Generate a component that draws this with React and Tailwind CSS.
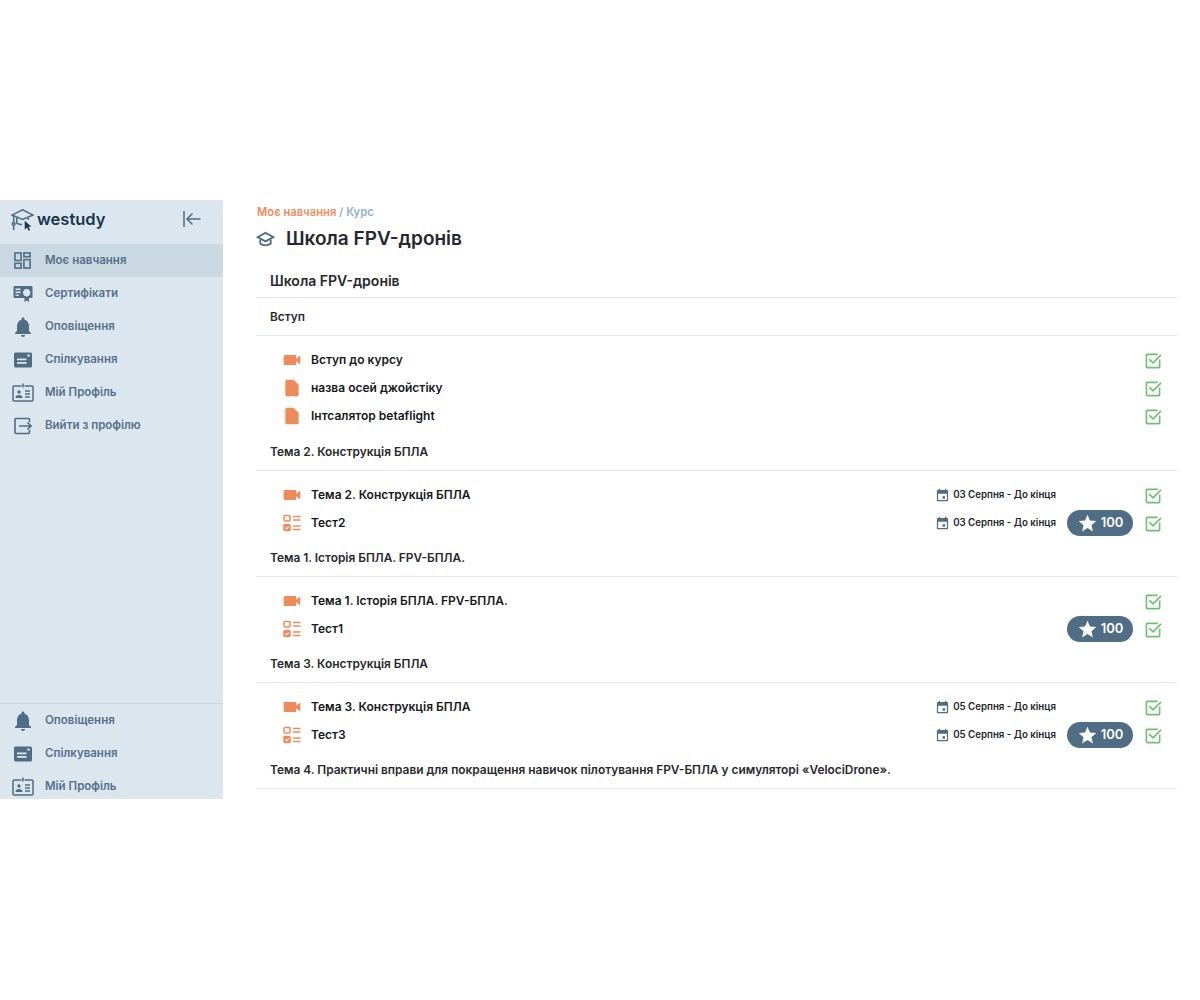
const font = { fontFamily: 'Inter, "Noto Sans", sans-serif' };

const Dashboard = () => (
  <svg width="17" height="17" viewBox="0 0 18 18" fill="none" stroke="#4f6d85" strokeWidth="1.700">
    <rect x="1" y="1" width="6.500" height="8" />
    <rect x="10.500" y="1" width="6.500" height="4" />
    <rect x="1" y="12" width="6.500" height="5" />
    <rect x="10.500" y="8" width="6.500" height="9" />
  </svg>
);

const Certificate = () => (
  <svg width="20" height="18" viewBox="0 0 20 18" fill="#4f6d85">
    <path d="M1.500 1h17a1 1 0 0 1 1 1v10a1 1 0 0 1-1 1H16v4l-2.300-1.500L11.500 17v-4h-10a1 1 0 0 1-1-1V2a1 1 0 0 1 1-1z" />
    <rect x="2.500" y="3.500" width="5" height="1.600" fill="#dce6ee" />
    <rect x="2.500" y="6.500" width="5" height="1.600" fill="#dce6ee" />
    <rect x="2.500" y="9.500" width="3.500" height="1.300" fill="#dce6ee" />
    <path d="M13.700 3.500l1 1 1.400-.2.300 1.400 1.200.7-.6 1.300.6 1.300-1.200.7-.3 1.400-1.400-.2-1 1-1-1-1.400.2-.3-1.400-1.200-.7.6-1.300-.6-1.300 1.200-.7.3-1.400 1.400.2z" fill="#dce6ee" />
  </svg>
);

const Bell = () => (
  <svg width="24" height="24" viewBox="0 0 24 24" fill="#4f6d85">
    <path d="M12 22c1.100 0 2-.9 2-2h-4c0 1.100.89 2 2 2zm6-6v-5c0-3.070-1.640-5.640-4.500-6.320V4c0-.83-.67-1.500-1.500-1.500s-1.500.67-1.500 1.500v.68C7.630 5.360 6 7.920 6 11v5l-2 2v1h16v-1l-2-2z" />
  </svg>
);

const Message = () => (
  <svg width="18" height="16" viewBox="0 0 18 16" fill="#4f6d85">
    <path d="M1.500.5h15A1.500 1.500 0 0 1 18 2v12a1.500 1.500 0 0 1-1.500 1.500h-15A1.500 1.500 0 0 1 0 14V2A1.500 1.500 0 0 1 1.500.5z" />
    <rect x="3" y="6.500" width="9.500" height="1.800" fill="#dce6ee" />
    <rect x="3" y="10" width="9.500" height="1.800" fill="#dce6ee" />
    <rect x="13.500" y="2.500" width="2.200" height="2.200" fill="#dce6ee" />
  </svg>
);

const ProfileCard = () => (
  <svg width="22" height="20" viewBox="0 0 22 20" fill="none" stroke="#4f6d85" strokeWidth="1.500">
    <path d="M9.500 3H2a1 1 0 0 0-1 1v13a1 1 0 0 0 1 1h18a1 1 0 0 0 1-1V4a1 1 0 0 0-1-1h-7.500" />
    <path d="M11 0.500v4" />
    <circle cx="7" cy="9" r="1.700" fill="#4f6d85" stroke="none" />
    <path d="M3.500 15c0-2.200 1.500-3 3.500-3s3.500.8 3.500 3z" fill="#4f6d85" stroke="none" />
    <path d="M13 8h5M13 11h5M13 14h5" />
  </svg>
);

const Logout = () => (
  <svg width="18" height="18" viewBox="0 0 18 18" fill="none" stroke="#4f6d85" strokeWidth="1.600">
    <path d="M15.500 5V2.500a1 1 0 0 0-1-1H2a1 1 0 0 0-1 1v13a1 1 0 0 0 1 1h12.500a1 1 0 0 0 1-1V13" />
    <path d="M5 9h12M13.500 5.500 17 9l-3.500 3.500" />
  </svg>
);

const LogoIcon = () => (
  <svg width="23" height="23" viewBox="0 0 26 26" fill="none" stroke="#4f6d85" strokeWidth="1.800">
    <path d="M13 2 25 8 13 13 1 8z" />
    <path d="M6.500 11v6c1.800 1.300 3.800 1.800 6 1.800M19.500 11v2.500" />
    <path d="M3 9v7" />
    <circle cx="3" cy="18" r="1.500" />
    <path d="M3 19.500V25" />
    <path d="M15.500 14.500v10l2.500-2.400 1.800 3.600 1.700-.9-1.800-3.500h3.400z" fill="#17384f" stroke="none" />
  </svg>
);

const Collapse = () => (
  <svg width="20" height="18" viewBox="0 0 20 18" fill="none" stroke="#4f6d85" strokeWidth="1.500">
    <path d="M2 1v16M18.500 9H5M10.500 3.500 5 9l5.500 5.500" />
  </svg>
);

const GradCap = () => (
  <svg width="19" height="17" viewBox="0 0 20 18" fill="none" stroke="#4f6d85" strokeWidth="1.900">
    <path d="M10 2 18.500 6.500 10 11 1.500 6.500z" />
    <path d="M4.500 9v4.500c3 2.300 8 2.300 11 0V9" />
  </svg>
);

const Video = () => (
  <svg width="20" height="20" viewBox="0 0 24 24" fill="#ef8a5a">
    <path d="M17 10.500V7c0-.55-.45-1-1-1H3c-.55 0-1 .45-1 1v10c0 .55.45 1 1 1h13c.55 0 1-.45 1-1v-3.500l5 4v-11l-5 4z" />
  </svg>
);

const FileIcon = () => (
  <svg width="20" height="20" viewBox="0 0 24 24" fill="#ef8a5a">
    <path d="M6 2c-1.100 0-1.990.9-1.990 2L4 20c0 1.100.89 2 1.990 2H18c1.100 0 2-.9 2-2V8l-6-6H6z" />
  </svg>
);

const Quiz = () => (
  <svg width="18" height="18" viewBox="0 0 18 18" fill="none" stroke="#ef8a5a" strokeWidth="1.500">
    <rect x="1" y="1.500" width="6" height="5.500" rx="1" />
    <rect x="1" y="10.500" width="6" height="6" rx="1" fill="#ef8a5a" />
    <path d="M2.500 13.500l1.300 1.300 1.900-2.200" stroke="#fff" strokeWidth="1.100" />
    <path d="M10 2.500h7.500M10 6h7.500M10 12h7.500M10 15.500h7.500" />
  </svg>
);

const Check = () => (
  <svg width="17" height="17" viewBox="0 0 18 18" fill="none" stroke="#6fbf73" strokeWidth="1.700">
    <path d="M15.500 8v7.500a1 1 0 0 1-1 1h-12a1 1 0 0 1-1-1v-12a1 1 0 0 1 1-1h11" />
    <path d="M4.500 7.500 8.500 11.500 17 3" />
  </svg>
);

const Calendar = () => (
  <svg width="15" height="15" viewBox="0 0 24 24" fill="#4f6d85">
    <path d="M16 1v2H8V1H6v2H5c-1.110 0-1.990.9-1.990 2L3 19c0 1.100.89 2 2 2h14c1.100 0 2-.9 2-2V5c0-1.100-.9-2-2-2h-1V1h-2zm3 18H5V9h14v10zM12 13h4v4h-4z" />
  </svg>
);

const Star = () => (
  <svg width="21" height="21" viewBox="0 0 24 24" fill="#fff">
    <path d="M12 17.270 18.180 21l-1.640-7.030L22 9.240l-7.190-.61L12 2 9.190 8.630 2 9.240l5.460 4.730L5.820 21z" />
  </svg>
);

const topMenu = [
  { label: 'Моє навчання', icon: Dashboard, active: true },
  { label: 'Сертифікати', icon: Certificate },
  { label: 'Оповіщення', icon: Bell },
  { label: 'Спілкування', icon: Message },
  { label: 'Мій Профіль', icon: ProfileCard },
  { label: 'Вийти з профілю', icon: Logout },
];

const bottomMenu = [
  { label: 'Оповіщення', icon: Bell },
  { label: 'Спілкування', icon: Message },
  { label: 'Мій Профіль', icon: ProfileCard },
];

const sections = [
  {
    title: 'Вступ',
    first: true,
    lessons: [
      { name: 'Вступ до курсу', icon: Video },
      { name: 'назва осей джойстіку', icon: FileIcon },
      { name: 'Інтсалятор betaflight', icon: FileIcon },
    ],
  },
  {
    title: 'Тема 2. Конструкція БПЛА',
    lessons: [
      { name: 'Тема 2. Конструкція БПЛА', icon: Video, date: '03 Серпня - До кінця' },
      { name: 'Тест2', icon: Quiz, date: '03 Серпня - До кінця', score: 100 },
    ],
  },
  {
    title: 'Тема 1. Історія БПЛА. FPV-БПЛА.',
    lessons: [
      { name: 'Тема 1. Історія БПЛА. FPV-БПЛА.', icon: Video },
      { name: 'Тест1', icon: Quiz, score: 100 },
    ],
  },
  {
    title: 'Тема 3. Конструкція БПЛА',
    lessons: [
      { name: 'Тема 3. Конструкція БПЛА', icon: Video, date: '05 Серпня - До кінця' },
      { name: 'Тест3', icon: Quiz, date: '05 Серпня - До кінця', score: 100 },
    ],
  },
  {
    title: 'Тема 4. Практичні вправи для покращення навичок пілотування FPV-БПЛА у симуляторі «VelociDrone».',
    lessons: [],
  },
];

const MenuItem = ({ item }) => {
  const Icon = item.icon;
  return (
    <div className={`flex h-[33px] items-center ${item.active ? 'bg-[#c9d8e1]' : ''}`}>
      <div className="flex w-[45px] shrink-0 justify-center">
        <Icon />
      </div>
      <span className="text-[11.500px] font-semibold text-[#56718a]">{item.label}</span>
    </div>
  );
};

const Lesson = ({ lesson }) => {
  const Icon = lesson.icon;
  return (
    <div className="flex h-[28px] items-center">
      <div className="flex w-[55px] shrink-0 justify-center pl-[16px]">
        <Icon />
      </div>
      <span className="mb-px text-[12px] font-semibold text-[#16181b]">{lesson.name}</span>
      <div className="ml-auto flex items-center">
        {lesson.date && (
          <div className="flex items-center gap-[3px]">
            <Calendar />
            <span className="text-[9.700px] font-semibold text-[#22262a]">{lesson.date}</span>
          </div>
        )}
        <div className="ml-[11px] w-[66px]">
          {lesson.score && (
            <div className="flex h-[26px] items-center justify-center gap-[3px] rounded-full bg-[#4f6d85] text-[13px] font-semibold text-white">
              <Star />
              {lesson.score}
            </div>
          )}
        </div>
        <div className="ml-[11px] flex w-[18px] justify-center">
          <Check />
        </div>
        <div className="w-[15px]" />
      </div>
    </div>
  );
};

const Section = ({ section }) => (
  <div>
    <div className={`flex items-end border-b border-[#e2e8ec] pb-[10px] pl-[14px] ${section.first ? 'h-[38px]' : 'h-[40px]'}`}>
      <span className="text-[11.900px] leading-[16px] font-semibold text-[#26292c]">{section.title}</span>
    </div>
    {section.lessons.length > 0 && (
      <div className={`pt-[10px] ${section.first ? 'pb-px' : ''}`}>
        {section.lessons.map((lesson) => (
          <Lesson key={lesson.name} lesson={lesson} />
        ))}
      </div>
    )}
  </div>
);

export default function App() {
  return (
    <div className="h-[1000px] bg-white pt-[200px]" style={font}>
      <div className="flex h-[599px]">
        <aside className="flex w-[223px] shrink-0 flex-col overflow-hidden bg-[#dce6ee]">
          <div className="flex h-[44px] shrink-0 items-center pr-[21px] pb-[6px] pl-[11px]">
            <LogoIcon />
            <span className="ml-[3px] text-[16.500px] font-semibold text-[#17384f]">westudy</span>
            <div className="ml-auto">
              <Collapse />
            </div>
          </div>
          <div className="flex-1">
            {topMenu.map((item) => (
              <MenuItem key={item.label} item={item} />
            ))}
          </div>
          <div className="mb-[-4px] shrink-0 border-t border-[#c9d5dd]">
            {bottomMenu.map((item) => (
              <MenuItem key={item.label} item={item} />
            ))}
          </div>
        </aside>
        <main className="flex-1 pr-[23px] pl-[33px]">
          <div className="pt-[5px] pl-px text-[11.200px] leading-[14px] font-semibold">
            <span className="text-[#ef8a5a]">Моє навчання</span>
            <span className="text-[#8fb0c6]"> / Курс</span>
          </div>
          <div className="mt-[6px] flex h-[28px] items-center gap-[11px]">
            <GradCap />
            <h1 className="text-[19px] font-semibold text-[#26292c]">Школа FPV-дронів</h1>
          </div>
          <div className="mt-[7px] flex h-[38px] items-center border-b border-[#e2e8ec] pt-[3px] pl-[14px] text-[14px] font-semibold text-[#26292c]">
            Школа FPV-дронів
          </div>
          {sections.map((section) => (
            <Section key={section.title} section={section} />
          ))}
        </main>
      </div>
    </div>
  );
}
